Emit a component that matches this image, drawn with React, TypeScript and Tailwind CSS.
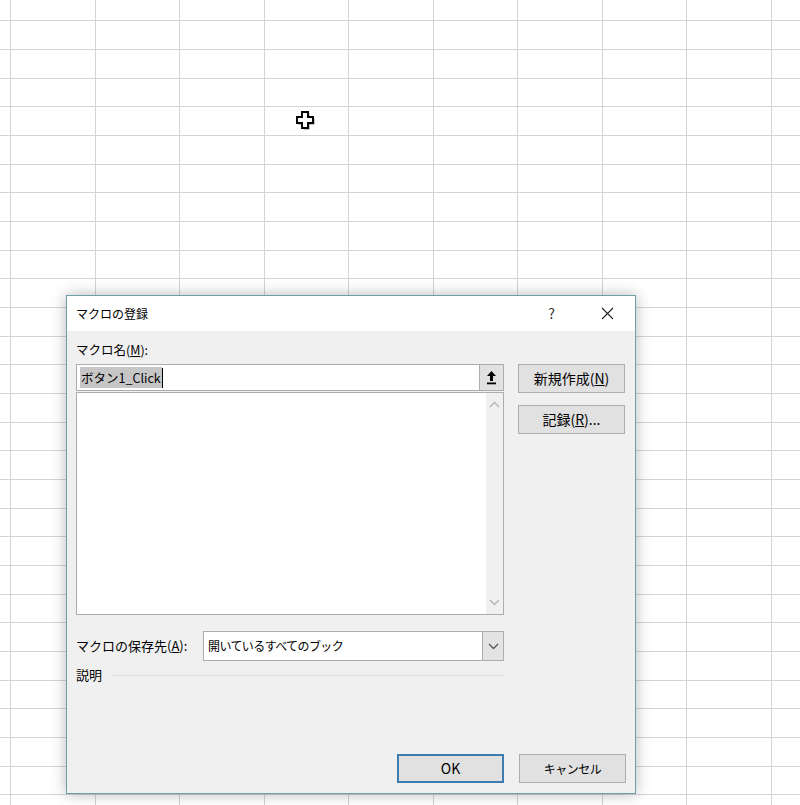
const COL_W = [
  "w-[11px]",
  "w-[85px]",
  "w-[84px]",
  "w-[85px]",
  "w-[84px]",
  "w-[85px]",
  "w-[84px]",
  "w-[85px]",
  "w-[84px]",
  "w-[85px]",
  "w-[84px]",
];

const ROW_H = Array.from({ length: 29 }, (_, i) =>
  i === 0 ? "h-[21px]" : i % 3 === 0 ? "h-[28px]" : "h-[29px]"
);

function Sheet() {
  return (
    <div className="flex flex-col">
      {ROW_H.map((h, r) => (
        <div key={r} className={`flex shrink-0 ${h}`}>
          {COL_W.map((w, c) => (
            <div
              key={c}
              className={`${w} shrink-0 h-full border-r border-b border-[#d4d4d4]`}
            />
          ))}
        </div>
      ))}
    </div>
  );
}

function Cursor() {
  const plus = "M6 1H12V6H17V12H12V17H6V12H1V6H6Z";
  return (
    <svg
      className="absolute left-[296px] top-[111px]"
      width="21"
      height="21"
      viewBox="0 0 21 21"
    >
      <path d={plus} transform="translate(1.5 1.5)" fill="#6a6a6a" opacity="0.75" />
      <path d={plus} fill="#fff" stroke="#000" strokeWidth="1.9" strokeLinejoin="miter" />
    </svg>
  );
}

function Btn({ children, primary }: { children: React.ReactNode; primary?: boolean }) {
  return (
    <div
      className={`h-[29px] w-[107px] flex items-center justify-center bg-[#e1e1e1] text-black ${
        primary ? "border-2 border-[#3d7cb0]" : "border border-[#adadad]"
      }`}
    >
      {children}
    </div>
  );
}

function ChevronUp() {
  return (
    <svg width="11" height="7" viewBox="0 0 11 7" fill="none" stroke="#b4b4b4" strokeWidth="1.3">
      <path d="M1 6L5.5 1.5L10 6" />
    </svg>
  );
}

function ChevronDown({ color = "#b4b4b4" }: { color?: string }) {
  return (
    <svg width="11" height="7" viewBox="0 0 11 7" fill="none" stroke={color} strokeWidth="1.3">
      <path d="M1 1L5.5 5.5L10 1" />
    </svg>
  );
}

export default function App() {
  return (
    <div className="relative w-[800px] h-[805px] bg-white overflow-hidden font-['Noto_Sans_CJK_JP','Noto_Sans',sans-serif]">
      <Sheet />
      <Cursor />

      <div className="absolute left-[66px] top-[295px] w-[570px] h-[499px] border border-[#6f9ea9] bg-[#f0f0f0] shadow-[0_0_14px_rgba(0,0,0,0.28)] flex flex-col">
        <header className="h-[35px] shrink-0 bg-white flex items-center pl-[9px] pr-[21px] text-[12px] text-black">
          <span>マクロの登録</span>
          <span className="ml-auto mr-[46px] text-[14px] text-[#333]">?</span>
          <svg width="13" height="13" viewBox="0 0 13 13" stroke="#222" strokeWidth="1.1">
            <path d="M1 1L12 12M12 1L1 12" />
          </svg>
        </header>

        <div className="flex-1 flex flex-col px-[9px] text-[12px] text-black">
          <div className="flex gap-[14px] mt-[10px]">
            <div className="w-[428px] flex flex-col">
              <div className="h-[18px] leading-[18px] text-[12.5px]">
                マクロ名(<span className="underline">M</span>):
              </div>
              <div className="mt-[5px] h-[27px] flex border border-[#acacac] bg-white">
                <div className="flex-1 flex items-center pl-[3px]">
                  <span className="bg-[#c6c6c6] h-[21px] leading-[21px] px-[1px] text-[12.5px]">ボタン1_Click</span>
                  <span className="w-px h-[20px] bg-black" />
                </div>
                <div className="w-[24px] h-full border-l border-[#adadad] bg-[#e1e1e1] flex items-center justify-center">
                  <svg width="11" height="15" viewBox="0 0 11 15">
                    <path d="M5.5 1L10 6H7V11H4V6H1Z" fill="#000" />
                    <rect x="1" y="12.5" width="9" height="1.8" fill="#000" />
                  </svg>
                </div>
              </div>
              <div className="mt-px h-[223px] flex border border-[#acacac] bg-white">
                <div className="flex-1" />
                <div className="w-[17px] bg-[#f0f0f0] flex flex-col justify-between items-center py-[8px]">
                  <ChevronUp />
                  <ChevronDown />
                </div>
              </div>
            </div>

            <div className="w-[107px] flex flex-col pt-[23px] gap-[12px] text-[14px]">
              <Btn>
                新規作成(<span className="underline">N</span>)
              </Btn>
              <Btn>
                記録(<span className="underline">R</span>)...
              </Btn>
            </div>
          </div>

          <div className="mt-[16px] flex items-center">
            <div className="w-[127px] text-[13px]">
              マクロの保存先(<span className="underline">A</span>):
            </div>
            <div className="w-[301px] h-[30px] flex border border-[#acacac] bg-white">
              <div className="flex-1 flex items-center pl-[4px] tracking-[-0.6px]">
                開いているすべてのブック
              </div>
              <div className="w-[21px] h-full border-l border-[#acacac] bg-[#e3e3e3] flex items-center justify-center">
                <ChevronDown color="#555" />
              </div>
            </div>
          </div>

          <div className="mt-[5px] w-[428px] h-[18px] flex items-center gap-[9px] text-[13px]">
            <span>説明</span>
            <div className="flex-1 h-px bg-[#dcdcdc]" />
          </div>

          <div className="mt-auto mb-[10px] flex justify-end gap-[15px]">
            <Btn primary>
              <span className="text-[14px]">OK</span>
            </Btn>
            <Btn>
              <span className="text-[12px] tracking-[-0.5px]">キャンセル</span>
            </Btn>
          </div>
        </div>
      </div>
    </div>
  );
}
